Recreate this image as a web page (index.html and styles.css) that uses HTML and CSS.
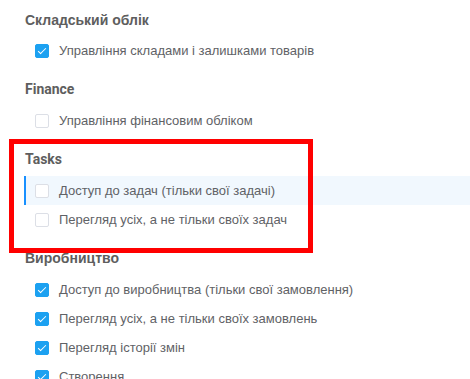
FILE: index.html
```html
<!DOCTYPE html>
<html lang="uk">
<head>
<meta charset="utf-8">
<link rel="stylesheet" href="styles.css">
</head>
<body>
<div class="page">
  <section class="group">
    <div class="group-title">Складський облік</div>
    <label class="row"><span class="cb checked"></span><span class="label">Управління складами і залишками товарів</span></label>
  </section>
  <section class="group">
    <div class="group-title latin">Finance</div>
    <label class="row"><span class="cb"></span><span class="label">Управління фінансовим обліком</span></label>
  </section>
  <section class="group">
    <div class="group-title latin">Tasks</div>
    <label class="row active"><span class="cb"></span><span class="label">Доступ до задач (тільки свої задачі)</span></label>
    <label class="row"><span class="cb"></span><span class="label">Перегляд усіх, а не тільки своїх задач</span></label>
  </section>
  <section class="group">
    <div class="group-title">Виробництво</div>
    <label class="row"><span class="cb checked"></span><span class="label">Доступ до виробництва (тільки свої замовлення)</span></label>
    <label class="row"><span class="cb checked"></span><span class="label">Перегляд усіх, а не тільки своїх замовлень</span></label>
    <label class="row"><span class="cb checked"></span><span class="label">Перегляд історії змін</span></label>
    <label class="row"><span class="cb checked"></span><span class="label">Створення</span></label>
  </section>
</div>
<div class="highlight-box"></div>
</body>
</html>
```
FILE: styles.css
```css
html, body {
  margin: 0;
  padding: 0;
  background: #ffffff;
  overflow: hidden;
}
body {
  font-family: "Liberation Sans", Arial, sans-serif;
  color: #606266;
  position: relative;
  height: 379px;
}
.page {
  padding: 10px 0 0 24px;
}
.group {
  margin-bottom: 14px;
}
.group-title {
  font-size: 14px;
  font-weight: 700;
  line-height: 20px;
  color: #5e5e5e;
  padding-left: 1px;
  margin-bottom: 6px;
}
.group-title.latin {
  font-family: Roboto, "Liberation Sans", Arial, sans-serif;
}
.group + .group .group-title {
  margin-bottom: 7px;
}
.row {
  display: flex;
  align-items: center;
  height: 29px;
  padding-left: 11px;
  border-left: 2px solid transparent;
  box-sizing: border-box;
}
.row.active {
  background: #f1f8fe;
  border-left-color: #1890ff;
}
.row .cb {
  width: 14px;
  height: 14px;
  box-sizing: border-box;
  border: 1px solid #dcdfe6;
  border-radius: 2px;
  background: #fff;
  position: relative;
  flex: none;
  margin-left: -2px;
}
.row .cb.checked {
  background: #1ca1f1;
  border-color: #1ca1f1;
}
.row .cb.checked::after {
  content: "";
  position: absolute;
  left: 4px;
  top: 1px;
  width: 3px;
  height: 7px;
  border: solid #fff;
  border-width: 0 1.5px 1.5px 0;
  transform: rotate(45deg);
}
.label {
  font-size: 13px;
  margin-left: 10px;
  color: #5f6266;
}
.highlight-box {
  position: absolute;
  left: 9px;
  top: 139px;
  width: 304px;
  height: 114px;
  box-sizing: border-box;
  border: 5px solid #ff0000;
  pointer-events: none;
}
```
